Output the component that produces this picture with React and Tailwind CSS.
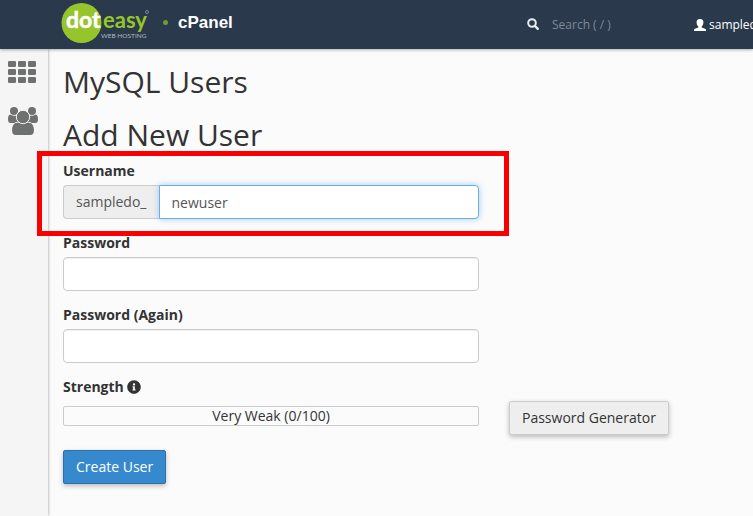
import { FaInfoCircle } from "react-icons/fa";

function Logo() {
  return (
    <svg width="90" height="42" viewBox="0 0 90 42" role="img" aria-label="doteasy web hosting" className="block shrink-0">
      <circle cx="20.500" cy="21" r="20" fill="#96c42b" />
      <g fontFamily="Lato, 'Open Sans', sans-serif">
        <text x="5" y="25.500" fontSize="23" fontWeight="700" fill="#ffffff" stroke="#ffffff" strokeWidth="0.500">dot</text>
        <text x="42" y="25.500" fontSize="22" fontWeight="700" fill="#96c42b">easy</text>
        <text x="40" y="36" fontSize="6.500" fill="#b4bcc4">WEB HOSTING</text>
      </g>
      <circle cx="86" cy="10" r="1.500" fill="none" stroke="#7b8896" strokeWidth="1" />
    </svg>
  );
}

function SearchIcon() {
  return (
    <svg width="13" height="13" viewBox="0 0 13 13" fill="none" stroke="#e8edf2" aria-hidden="true">
      <circle cx="5" cy="5" r="3.800" strokeWidth="2" />
      <path d="M8 8l2.800 2.800" strokeWidth="2.400" strokeLinecap="round" />
    </svg>
  );
}

function UserIcon() {
  return (
    <svg width="12" height="12" viewBox="0 0 12 12" fill="#ffffff" aria-hidden="true" className="shrink-0">
      <path d="M6 0C3.800 0 2.600 1.200 2.600 3c0 2 .6 3.600 1.700 4.500v.9L1 9.800C.2 10.200 0 10.500 0 11.200v.8h12v-.8c0-.7-.2-1-1-1.400L7.700 8.400v-.9C8.800 6.600 9.400 5 9.400 3 9.400 1.200 8.200 0 6 0z" />
    </svg>
  );
}

function GridIcon() {
  return (
    <svg width="28" height="22" viewBox="0 0 28 22" fill="#6f7070" aria-hidden="true">
      {[0, 8, 16].map((y) =>
        [0, 10, 20].map((x) => <rect key={`${x}-${y}`} x={x} y={y} width="8" height="6" rx="1.300" />)
      )}
    </svg>
  );
}

function GroupIcon() {
  return (
    <svg width="30" height="28" viewBox="0 0 30 28" fill="#6f7070" aria-hidden="true">
      <circle cx="6" cy="4" r="4" />
      <circle cx="24" cy="4" r="4" />
      <path d="M2.200 7.500C.6 7.500 0 10 0 12.500 0 15 1 16 2.500 16H10V8.200C7 9.600 4 8.500 2.200 7.500z" />
      <path d="M27.800 7.500c1.600 0 2.200 2.500 2.200 5 0 2.500-1 3.500-2.500 3.500H20V8.200c3 1.400 6 .3 7.800-.7z" />
      <path d="M9.300 15.400C5.500 15.400 4 19 4 23.500 4 26.500 5.500 28 8 28h14c2.500 0 4-1.500 4-4.500 0-4.500-1.500-8.100-5.300-8.100z" stroke="#f5f5f5" strokeWidth="1" />
      <path d="M9.300 15.800C5.900 15.800 4.200 19 4.200 23.500 4.200 26.500 5.500 28 8 28h14c2.500 0 3.800-1.500 3.800-4.500 0-4.500-1.700-7.700-5.100-7.700z" />
      <circle cx="15" cy="10" r="6.700" stroke="#f5f5f5" strokeWidth="1" />
    </svg>
  );
}

const inputBase = "h-[34px] w-full min-w-0 border bg-white px-3 text-sm text-[#555555] outline-none";

function PasswordField({ id, label }) {
  return (
    <div className="mb-[14px]">
      <label htmlFor={id} className="mb-1 block font-bold">{label}</label>
      <input id={id} type="password" className={`${inputBase} block rounded border-[#cccccc] shadow-[inset_0_1px_1px_rgba(0,0,0,0.07)]`} />
    </div>
  );
}

export default function App() {
  return (
    <div className="flex h-screen flex-col overflow-hidden bg-[#fbfbfc] font-['Open_Sans',sans-serif] text-sm leading-5 text-[#333333]">
      <header className="relative z-10 flex h-[49px] shrink-0 items-center bg-[#2a394b] pl-[61px] text-white shadow-[0_1px_3px_rgba(0,0,0,0.3)]">
        <a href="#home" className="flex shrink-0 items-center pb-1">
          <Logo />
          <span className="ml-3 h-[5px] w-[5px] rounded-full bg-[#6c9c35]" />
          <span className="ml-[10px] font-['Liberation_Sans',Arial,sans-serif] text-[17px] font-bold">cPanel</span>
        </a>
        <div className="ml-auto flex items-center">
          <label htmlFor="search" aria-label="Search"><SearchIcon /></label>
          <input id="search" type="text" placeholder="Search ( / )" className="ml-3 w-[142px] bg-transparent text-xs outline-none placeholder:text-[#7d8a98]" />
        </div>
        <a href="#account" className="flex w-[59px] shrink-0 items-center gap-[3px] overflow-hidden whitespace-nowrap text-xs">
          <UserIcon />
          <span>sampledo</span>
        </a>
      </header>

      <div className="flex min-h-0 flex-1">
        <nav className="flex w-12 shrink-0 flex-col items-start gap-6 bg-[#f5f5f5] pl-2 pt-3 shadow-[0_0_3px_rgba(0,0,0,0.4)]">
          <a href="#apps" aria-label="All tools"><GridIcon /></a>
          <a href="#users" aria-label="User manager"><GroupIcon /></a>
        </nav>

        <main className="min-w-0 flex-1 px-[15px] pt-4">
          <h1 className="text-3xl leading-[33px]">MySQL Users</h1>
          <h2 className="mb-[10px] mt-5 text-3xl leading-[33px]">Add New User</h2>

          <form onSubmit={(e) => e.preventDefault()}>
            <div className="w-full max-w-[416px]">
              <div className="relative mb-[14px]">
                <label htmlFor="username" className="mb-1 block font-bold">Username</label>
                <div className="flex">
                  <span className="flex h-[34px] shrink-0 items-center rounded-l border border-r-0 border-[#cccccc] bg-[#eeeeee] px-3 text-[#555555]">sampledo_</span>
                  <input id="username" type="text" defaultValue="newuser" className={`${inputBase} rounded-r border-[#66afe9] shadow-[0_0_6px_rgba(102,175,233,0.6)]`} />
                </div>
                <div className="pointer-events-none absolute -bottom-[17px] -left-[26px] -right-[30px] -top-[10px] border-[5px] border-[#fb0000]" />
              </div>
              <PasswordField id="password" label="Password" />
              <PasswordField id="password-again" label="Password (Again)" />
              <div className="mb-1 flex items-center gap-[3px] font-bold">
                <span id="strength">Strength</span>
                <FaInfoCircle size={14} aria-hidden="true" />
              </div>
            </div>
            <div className="flex items-start gap-[30px]">
              <div role="meter" aria-labelledby="strength" aria-valuenow={0} aria-valuemin={0} aria-valuemax={100} className="mt-[5px] flex h-5 w-full max-w-[416px] items-center justify-center rounded-xs border border-[#cccccc]">
                Very Weak (0/100)
              </div>
              <button type="button" className="h-[34px] shrink-0 rounded-xs border border-[#cccccc] bg-[#eeeeee] px-3 shadow-[0_2px_5px_rgba(0,0,0,0.26)]">Password Generator</button>
            </div>
            <button type="submit" className="mt-[15px] h-[34px] rounded-xs border border-[#2e6fab] bg-[#3789ce] px-3 text-white shadow-[0_2px_5px_rgba(0,0,0,0.26)]">Create User</button>
          </form>
        </main>
      </div>
    </div>
  );
}
